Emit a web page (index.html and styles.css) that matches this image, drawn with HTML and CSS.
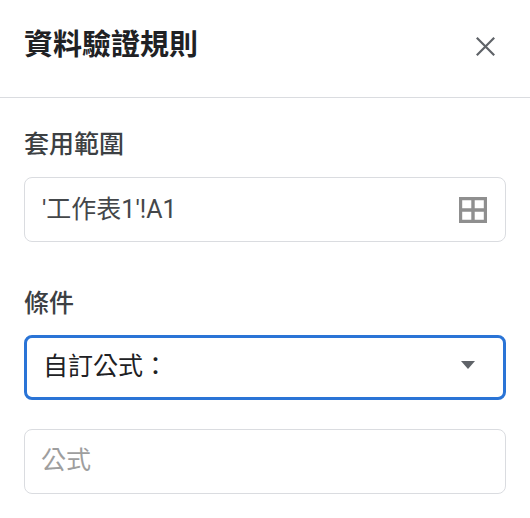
FILE: index.html
```html
<!DOCTYPE html>
<html lang="zh-TW">
<head>
    <meta charset="UTF-8">
    <title>資料驗證規則</title>
    <link rel="stylesheet" href="styles.css">
</head>
<body>
    <div class="panel">
        <div class="panel-header">
            <h2>資料驗證規則</h2>
            <button class="close-btn">
                <svg width="19" height="19" viewBox="0 0 19 19"><path d="M.8.8l17.4 17.4M18.2.8L.8 18.2" fill="none" stroke="#5f6368" stroke-width="2.2"/></svg>
            </button>
        </div>
        <div class="panel-body">
            <div class="label range-label">套用範圍</div>
            <div class="field range-field">
                <span class="field-text">'工作表1'!A1</span>
                <svg class="grid-icon" width="28" height="26" viewBox="0 0 28 26">
                    <path fill-rule="evenodd" fill="#8f8f8f" d="M0 0h28v26H0zM3.2 3.2v8.1h9.1V3.2zM15.7 3.2v8.1h9.1V3.2zM3.2 14.7v8.1h9.1v-8.1zM15.7 14.7v8.1h9.1v-8.1z"/>
                </svg>
            </div>
            <div class="label cond-label">條件</div>
            <div class="field select-field">
                <span class="field-text select-text">自訂公式：</span>
                <span class="arrow"></span>
            </div>
            <div class="field formula-field">
                <span class="field-text placeholder">公式</span>
            </div>
        </div>
    </div>
</body>
</html>
```

FILE: styles.css
```css
* {
    margin: 0;
    padding: 0;
    box-sizing: border-box;
}

body {
    font-family: Roboto, "Noto Sans CJK TC", sans-serif;
    background: #fff;
    color: #202124;
}

.panel {
    width: 530px;
    height: 518px;
    overflow: hidden;
}

.panel-header {
    height: 98px;
    padding: 0 35px 5px 24px;
    border-bottom: 1px solid #dadce0;
    display: flex;
    justify-content: space-between;
    align-items: center;
}

.panel-header h2 {
    font-size: 29px;
    font-weight: 700;
    line-height: 36px;
    margin-bottom: 3px;
}

.close-btn {
    background: none;
    border: none;
    width: 19px;
    height: 19px;
    display: flex;
}

.panel-body {
    padding: 0 24px;
}

.label {
    font-size: 25px;
    font-weight: 500;
    line-height: 32px;
    color: #3c4043;
}

.range-label {
    margin-top: 31px;
}

.cond-label {
    margin-top: 46px;
}

.field {
    width: 482px;
    height: 65px;
    border: 1px solid #dadce0;
    border-radius: 8px;
    display: flex;
    align-items: center;
    justify-content: space-between;
    font-size: 25px;
}

.field-text {
    margin-bottom: 5px;
}

.range-field {
    margin-top: 16px;
    padding: 0 18px 0 17px;
    color: #44474a;
}

.select-field {
    margin-top: 15px;
    padding: 0 28px 0 16px;
    border: 3px solid #2a74d6;
    color: #202124;
}

.select-text {
    margin-bottom: 8px;
}

.arrow {
    width: 0;
    height: 0;
    margin-bottom: 6px;
    border-left: 7px solid transparent;
    border-right: 7px solid transparent;
    border-top: 8px solid #5f6368;
}

.formula-field {
    margin-top: 29px;
    padding: 0 16px;
}

.placeholder {
    margin-bottom: 7px;
    color: #9e9e9e;
}
```
